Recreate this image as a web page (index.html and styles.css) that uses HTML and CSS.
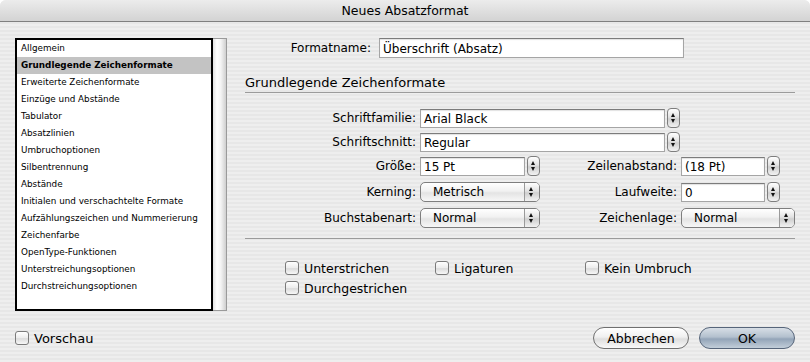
FILE: index.html
```html
<!DOCTYPE html>
<html>
<head>
  <title>Neues Absatzformat</title>
  <link rel="stylesheet" href="styles.css">
</head>
<body>

  <div class="window">
    <div class="titlebar">Neues Absatzformat</div>

    <div class="content">
      <div class="sidebar">
        <ul class="list">
          <li>Allgemein</li>
          <li class="selected">Grundlegende Zeichenformate</li>
          <li>Erweiterte Zeichenformate</li>
          <li>Einzüge und Abstände</li>
          <li>Tabulator</li>
          <li>Absatzlinien</li>
          <li>Umbruchoptionen</li>
          <li>Silbentrennung</li>
          <li>Abstände</li>
          <li>Initialen und verschachtelte Formate</li>
          <li>Aufzählungszeichen und Nummerierung</li>
          <li>Zeichenfarbe</li>
          <li>OpenType-Funktionen</li>
          <li>Unterstreichungsoptionen</li>
          <li>Durchstreichungsoptionen</li>
        </ul>
        <div class="scrolltrack"></div>
      </div>

      <div class="panel">
        <div class="name-row">
          <span class="lbl name-lbl">Formatname:</span>
          <div class="field name-field">Überschrift (Absatz)</div>
        </div>

        <div class="section-title">Grundlegende Zeichenformate</div>

        <div class="rows">
          <div class="row">
            <span class="lbl">Schriftfamilie:</span>
            <div class="combo combo-wide"><div class="field">Arial Black</div><span class="stepper"></span></div>
          </div>
          <div class="row">
            <span class="lbl">Schriftschnitt:</span>
            <div class="combo combo-wide"><div class="field">Regular</div><span class="stepper"></span></div>
          </div>
          <div class="row">
            <span class="lbl">Größe:</span>
            <div class="combo combo-small"><div class="field">15 Pt</div><span class="stepper"></span></div>
            <span class="lbl lbl2">Zeilenabstand:</span>
            <div class="combo combo-small2"><div class="field">(18 Pt)</div><span class="stepper"></span></div>
          </div>
          <div class="row row-popup">
            <span class="lbl">Kerning:</span>
            <div class="popup popup-small"><span class="popup-text">Metrisch</span><span class="popup-arrows"></span></div>
            <span class="lbl lbl2">Laufweite:</span>
            <div class="combo combo-small2"><div class="field">0</div><span class="stepper"></span></div>
          </div>
          <div class="row row-popup">
            <span class="lbl">Buchstabenart:</span>
            <div class="popup popup-small"><span class="popup-text">Normal</span><span class="popup-arrows"></span></div>
            <span class="lbl lbl2">Zeichenlage:</span>
            <div class="popup popup-wide2"><span class="popup-text">Normal</span><span class="popup-arrows"></span></div>
          </div>
        </div>

        <div class="separator"></div>

        <div class="checks">
          <label class="check"><span class="box"></span>Unterstrichen</label>
          <label class="check"><span class="box"></span>Ligaturen</label>
          <label class="check"><span class="box"></span>Kein Umbruch</label>
          <label class="check"><span class="box"></span>Durchgestrichen</label>
        </div>
      </div>
    </div>

    <div class="footer">
      <label class="check preview"><span class="box"></span>Vorschau</label>
      <div class="buttons">
        <button class="btn">Abbrechen</button>
        <button class="btn btn-default">OK</button>
      </div>
    </div>
  </div>

</body>
</html>
```

FILE: styles.css
```css
body {
  margin: 0;
  background-color: #fff;
  font-family: "DejaVu Sans", sans-serif;
  color: #000;
}

.window {
  width: 810px;
  height: 362px;
  border-radius: 6px 6px 0 0;
  overflow: hidden;
  background: repeating-linear-gradient(#eeeeee 0 2px, #e7e7e7 2px 4px);
}

.titlebar {
  height: 21px;
  line-height: 21px;
  text-align: center;
  font-size: 12.5px;
  background: linear-gradient(#ececec, #d3d3d3);
  border-bottom: 1px solid #7f7f7f;
}

.content {
  display: flex;
  padding: 16px 15px 0 15px;
}

/* left list */
.sidebar {
  display: flex;
  flex: none;
  width: 214px;
  height: 273px;
}

.list {
  list-style: none;
  margin: 0;
  padding: 0;
  width: 194px;
  background-color: #fff;
  border: 2px solid #000;
  font-size: 8.8px;
}

.list li {
  height: 17px;
  line-height: 17px;
  padding-left: 4px;
  white-space: nowrap;
}

.list li.selected {
  background-color: #c3c3c3;
  font-weight: bold;
}

.scrolltrack {
  width: 13px;
  border: 1px solid #9a9a9a;
  border-left: none;
  background: linear-gradient(90deg, #e2e2e2, #ffffff 30%, #f4f4f4 60%, #cfcfcf);
}

/* right panel */
.panel {
  flex: 1;
  margin-left: 16px;
}

.lbl {
  display: inline-block;
  width: 171px;
  margin-right: 4px;
  text-align: right;
  font-size: 12px;
}

.name-row {
  display: flex;
  align-items: center;
}

.name-lbl {
  width: 126px;
  margin-right: 8px;
}

.field {
  height: 19px;
  line-height: 19px;
  padding-left: 3px;
  font-size: 12px;
  background-color: #fff;
  border: 1px solid #a5a5a5;
  border-top-color: #7c7c7c;
  box-shadow: inset 0 1px 1px rgba(0, 0, 0, 0.12);
  box-sizing: border-box;
}

.name-field {
  width: 305px;
  height: 20px;
  line-height: 20px;
}

.section-title {
  margin-top: 17px;
  width: 550px;
  height: 16px;
  line-height: 16px;
  font-size: 13px;
  padding-bottom: 1px;
  border-bottom: 1px solid #9b9b9b;
}

.rows {
  display: flex;
  flex-direction: column;
  gap: 4px;
  margin-top: 15px;
}

.row {
  display: flex;
  align-items: center;
  height: 20px;
}

.row-popup {
  margin-top: 2px;
}

.combo {
  display: flex;
  align-items: center;
}

.combo .field {
  flex: 1;
}

.combo-wide {
  width: 260px;
}

.combo-small {
  width: 120px;
}

.combo-small2 {
  width: 99px;
}

.lbl2 {
  width: 137px;
}

.stepper {
  position: relative;
  flex: none;
  width: 11px;
  height: 18px;
  margin-left: 2px;
  border: 1px solid #7e7e7e;
  border-radius: 4px;
  background: linear-gradient(#ffffff, #e2e2e2 45%, #cfcfcf 55%, #f2f2f2);
}

.stepper::before,
.stepper::after {
  content: "";
  position: absolute;
  left: 3px;
  border-left: 2.5px solid transparent;
  border-right: 2.5px solid transparent;
}

.stepper::before {
  top: 4px;
  border-bottom: 4px solid #111;
}

.stepper::after {
  bottom: 4px;
  border-top: 4px solid #111;
}

.popup {
  display: flex;
  flex: none;
  align-items: center;
  height: 20px;
  border: 1px solid #7e7e7e;
  border-radius: 5px;
  background: linear-gradient(#ffffff, #f1f1f1 45%, #e4e4e4 55%, #f7f7f7);
  box-sizing: border-box;
}

.popup-small {
  width: 120px;
}

.popup-wide2 {
  width: 114px;
}

.popup-text {
  flex: 1;
  padding-left: 12px;
  font-size: 12px;
}

.popup .popup-arrows {
  position: relative;
  width: 14px;
  height: 18px;
  border-left: 1px solid #9a9a9a;
  border-radius: 0 4px 4px 0;
  background: linear-gradient(#ffffff, #e2e2e2 45%, #cfcfcf 55%, #f2f2f2);
}

.popup-arrows::before,
.popup-arrows::after {
  content: "";
  position: absolute;
  left: 4px;
  border-left: 2.5px solid transparent;
  border-right: 2.5px solid transparent;
}

.popup-arrows::before {
  top: 4px;
  border-bottom: 4px solid #111;
}

.popup-arrows::after {
  bottom: 4px;
  border-top: 4px solid #111;
}

.separator {
  width: 550px;
  margin-top: 10px;
  border-top: 1px solid #9b9b9b;
}

.checks {
  display: grid;
  grid-template-columns: 150px 150px 150px;
  row-gap: 6px;
  margin-top: 22px;
  margin-left: 40px;
}

.check {
  display: flex;
  align-items: center;
  height: 14px;
  font-size: 12.5px;
}

.box {
  width: 12px;
  height: 12px;
  margin-right: 5px;
  border: 1px solid #7a7a7a;
  border-radius: 3px;
  background: linear-gradient(#ffffff, #ececec 50%, #dcdcdc 55%, #f7f7f7);
}

.footer {
  display: flex;
  justify-content: space-between;
  align-items: center;
  height: 22px;
  margin: 16px 15px 0 15px;
}

.preview {
  font-size: 13px;
}

.buttons {
  display: flex;
  gap: 10px;
}

.btn {
  width: 96px;
  height: 22px;
  padding: 0;
  font-family: "DejaVu Sans", sans-serif;
  font-size: 12.5px;
  color: #000;
  border: 1px solid #6f6f6f;
  border-radius: 11px;
  background: linear-gradient(#ffffff, #f0f0f0 45%, #dedede 55%, #f9f9f9);
}

.btn-default {
  border-color: #56657a;
  background: linear-gradient(#d7dee6, #b3c0ce 45%, #93a4b8 55%, #c2ced9);
}
```
